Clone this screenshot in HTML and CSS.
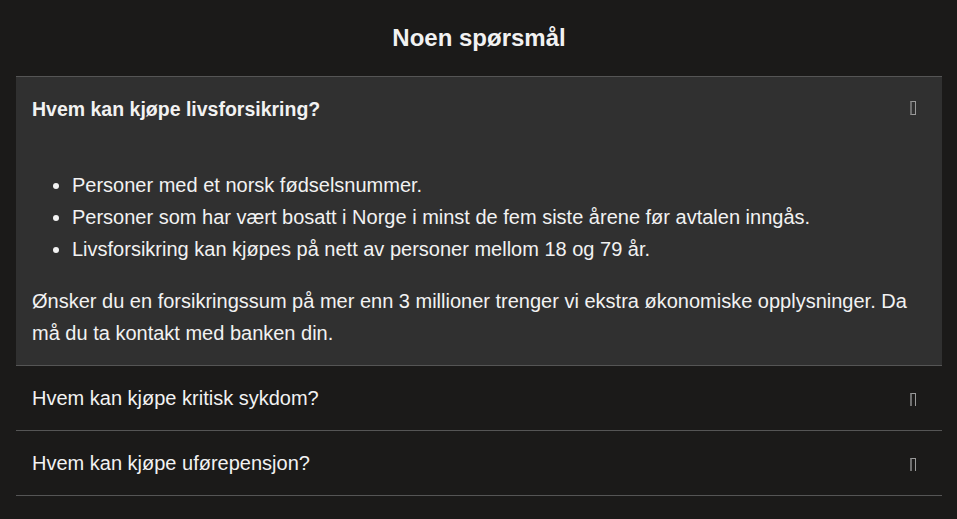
FILE: index.html
```html
<!DOCTYPE html>
<html lang="no">
<head>
<meta charset="utf-8">
<link rel="stylesheet" href="styles.css">
<title>Noen spørsmål</title>
</head>
<body>
<main class="faq">
  <h2 class="faq-title">Noen spørsmål</h2>
  <div class="accordion">
    <section class="item open">
      <div class="item-head">
        <span class="q">Hvem kan kjøpe livsforsikring?</span>
        <span class="ico ico-box"></span>
      </div>
      <div class="item-body">
        <ul>
          <li>Personer med et norsk fødselsnummer.</li>
          <li>Personer som har vært bosatt i Norge i minst de fem siste årene før avtalen inngås.</li>
          <li>Livsforsikring kan kjøpes på nett av personer mellom 18 og 79 år.</li>
        </ul>
        <p>Ønsker du en forsikringssum på mer enn 3 millioner trenger vi ekstra økonomiske opplysninger. Da må du ta kontakt med banken din.</p>
      </div>
    </section>
    <section class="item">
      <div class="item-head">
        <span class="q">Hvem kan kjøpe kritisk sykdom?</span>
        <span class="ico ico-open"></span>
      </div>
    </section>
    <section class="item">
      <div class="item-head">
        <span class="q">Hvem kan kjøpe uførepensjon?</span>
        <span class="ico ico-open"></span>
      </div>
    </section>
  </div>
</main>
</body>
</html>
```
FILE: styles.css
```css
* { box-sizing: border-box; }
html, body {
  margin: 0;
  background: #1b1a19;
  color: #f2f2f2;
  font-family: "Liberation Sans", Arial, sans-serif;
}
.faq {
  padding: 0 15px 0 16px;
}
.faq-title {
  margin: 0;
  height: 76px;
  line-height: 76px;
  text-align: center;
  font-size: 24px;
  font-weight: bold;
}
.accordion {
  border-top: 1px solid #555;
}
.item {
  border-bottom: 1px solid #555;
}
.item.open {
  background: #303030;
}
.item-head {
  display: flex;
  align-items: center;
  justify-content: space-between;
  padding: 16px 26px 16px 16px;
  font-size: 20px;
  line-height: 32px;
}
.open .item-head .q {
  font-weight: bold;
  font-size: 19.5px;
}
.ico {
  display: block;
  width: 6px;
  height: 14px;
  border: 1px solid #9a9a9a;
  border-left: 2px solid #707070;
}
.ico-box {
  margin-top: -3px;
}
.ico-open {
  border-bottom: none;
  height: 13px;
  margin-top: 3px;
}
.item-body {
  padding: 8px 16px 16px 16px;
  font-size: 20px;
  line-height: 32px;
}
.item-body ul {
  margin: 20px 0;
  padding-left: 40px;
}
.item-body p {
  margin: 0;
}
```
